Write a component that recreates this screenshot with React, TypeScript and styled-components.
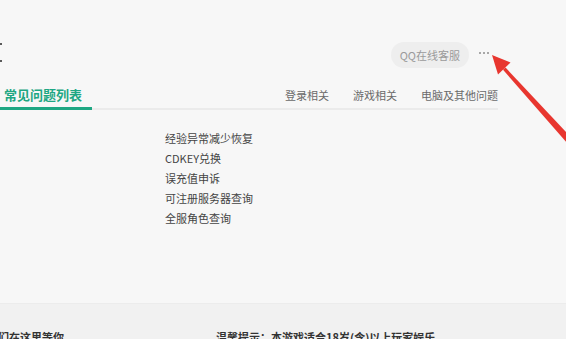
import styled, { createGlobalStyle } from "styled-components";

const GlobalStyle = createGlobalStyle`
  html, body {
    margin: 0;
    padding: 0;
    background: #f7f7f7;
  }
  body {
    width: 566px;
    height: 339px;
    overflow: hidden;
    font-family: "Noto Sans CJK SC", "Noto Sans", "Liberation Sans", sans-serif;
  }
`;

const tabs = ["登录相关", "游戏相关", "电脑及其他问题"];
const questions = ["经验异常减少恢复", "CDKEY兑换", "误充值申诉", "可注册服务器查询", "全服角色查询"];

function App() {
  return (
    <Page>
      <GlobalStyle />
      <Main>
        <Container>
          <TopBar>
            <BackMark>
              <Dot />
              <Dot />
            </BackMark>
            <Service>QQ在线客服</Service>
            <More>
              <Dot $light />
              <Dot $light />
              <Dot $light />
            </More>
          </TopBar>
          <TabBar>
            <ActiveTab>常见问题列表</ActiveTab>
            <TabGroup>
              {tabs.map((t) => (
                <Tab key={t}>{t}</Tab>
              ))}
            </TabGroup>
          </TabBar>
          <QuestionList>
            {questions.map((q) => (
              <Question key={q}>{q}</Question>
            ))}
          </QuestionList>
        </Container>
      </Main>
      <Footer>
        <FooterText>们在这里等你</FooterText>
        <Notice>温馨提示：本游戏适合18岁(含)以上玩家娱乐</Notice>
      </Footer>
      <Arrow width="566" height="339" viewBox="0 0 566 339">
        <polygon points="492,55 510.5,62.5 498,74.5" fill="#e8362f" />
        <polygon points="505.5,67.5 503,69.8 568,144 573,139.5" fill="#e8362f" />
      </Arrow>
    </Page>
  );
}

export default App;

const Page = styled.div`
  position: relative;
  width: 566px;
  height: 339px;
  overflow: hidden;
  display: flex;
  flex-direction: column;
`;

const Main = styled.section`
  height: 303px;
  flex-shrink: 0;
  background: #f7f7f7;
`;

const Container = styled.div`
  width: 498px;
`;

const TopBar = styled.div`
  margin-top: 42px;
  height: 26px;
  display: flex;
  align-items: center;
  padding-right: 9px;
`;

const BackMark = styled.div`
  display: flex;
  flex-direction: column;
  gap: 15px;
  margin-top: -5px;
  margin-right: auto;
`;

const Dot = styled.span<{ $light?: boolean }>`
  width: 2px;
  height: 2px;
  background: ${(p) => (p.$light ? "#a8a8a8" : "#5a5a5a")};
`;

const Service = styled.div`
  height: 26px;
  line-height: 26px;
  padding: 0 9px;
  border-radius: 13px;
  background: #eeeeee;
  color: #9a9a9a;
  font-size: 11px;
`;

const More = styled.div`
  margin-left: 10px;
  margin-top: -5px;
  display: flex;
  gap: 2px;
`;

const TabBar = styled.div`
  margin-top: 18px;
  display: flex;
  align-items: flex-start;
  border-bottom: 2px solid #ebebeb;
`;

const ActiveTab = styled.div`
  width: 92px;
  box-sizing: border-box;
  padding: 0 0 3px 4px;
  margin-bottom: -2px;
  border-bottom: 3px solid #1ea783;
  color: #1ea783;
  font-size: 13px;
  font-weight: 700;
  line-height: 18px;
`;

const TabGroup = styled.div`
  margin-left: auto;
  display: flex;
  gap: 24px;
`;

const Tab = styled.div`
  color: #6a6a6a;
  font-size: 11px;
  line-height: 18px;
`;

const QuestionList = styled.ul`
  list-style: none;
  margin: 18px 0 0;
  padding: 0 0 0 165px;
`;

const Question = styled.li`
  color: #444;
  font-size: 11px;
  line-height: 20px;
`;

const Footer = styled.footer`
  flex: 1;
  background: #f1f1f1;
  border-top: 1px solid #ececec;
  display: flex;
  padding-top: 25px;
`;

const FooterText = styled.div`
  width: 218px;
  margin-left: -2px;
  color: #333;
  font-size: 11px;
  font-weight: 700;
  line-height: 16px;
`;

const Notice = styled.div`
  color: #333;
  font-size: 11px;
  font-weight: 700;
  line-height: 16px;
`;

const Arrow = styled.svg`
  position: absolute;
  left: 0;
  top: 0;
  pointer-events: none;
`;
